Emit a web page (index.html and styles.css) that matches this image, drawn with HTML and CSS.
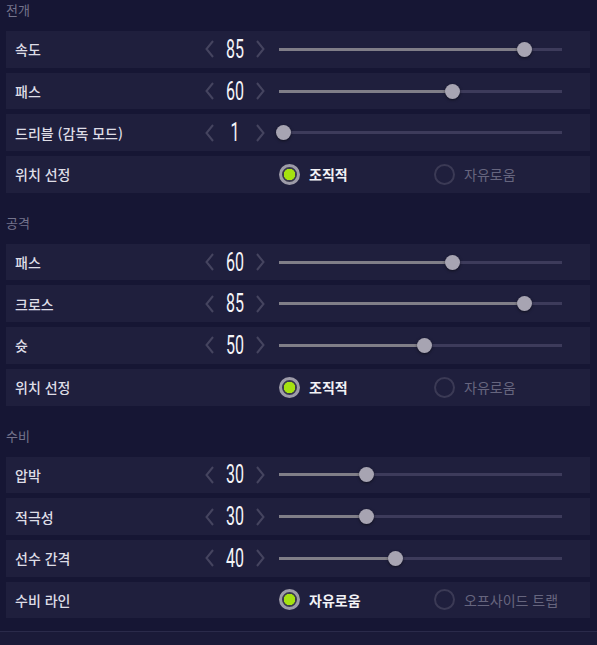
FILE: index.html
```html
<!DOCTYPE html>
<html lang="ko">

<head>
    <meta charset="UTF-8">
    <meta name="viewport" content="width=device-width, initial-scale=1.0">
    <title>팀 전술</title>
    <link rel="stylesheet" href="styles.css">
</head>

<body>
    <div class="panel">
        <div class="section">
            <div class="section-title">전개</div>
            <div class="row">
                <span class="label">속도</span>
                <div class="stepper">
                    <svg class="chev" viewBox="0 0 9 18"><polyline points="8,1 1.5,9 8,17" /></svg>
                    <span class="num">85</span>
                    <svg class="chev" viewBox="0 0 9 18"><polyline points="1,1 7.5,9 1,17" /></svg>
                </div>
                <div class="slider"><div class="fill" style="width: 245px"></div><div class="thumb" style="left: 245px"></div></div>
            </div>
            <div class="row">
                <span class="label">패스</span>
                <div class="stepper">
                    <svg class="chev" viewBox="0 0 9 18"><polyline points="8,1 1.5,9 8,17" /></svg>
                    <span class="num">60</span>
                    <svg class="chev" viewBox="0 0 9 18"><polyline points="1,1 7.5,9 1,17" /></svg>
                </div>
                <div class="slider"><div class="fill" style="width: 173px"></div><div class="thumb" style="left: 173px"></div></div>
            </div>
            <div class="row">
                <span class="label">드리블 (감독 모드)</span>
                <div class="stepper">
                    <svg class="chev" viewBox="0 0 9 18"><polyline points="8,1 1.5,9 8,17" /></svg>
                    <span class="num">1</span>
                    <svg class="chev" viewBox="0 0 9 18"><polyline points="1,1 7.5,9 1,17" /></svg>
                </div>
                <div class="slider"><div class="fill" style="width: 4px"></div><div class="thumb" style="left: 4px"></div></div>
            </div>
            <div class="row">
                <span class="label">위치 선정</span>
                <div class="spacer"></div>
                <div class="options">
                    <span class="option checked"><span class="radio"></span>조직적</span>
                    <span class="option"><span class="radio"></span>자유로움</span>
                </div>
            </div>
        </div>

        <div class="section">
            <div class="section-title">공격</div>
            <div class="row">
                <span class="label">패스</span>
                <div class="stepper">
                    <svg class="chev" viewBox="0 0 9 18"><polyline points="8,1 1.5,9 8,17" /></svg>
                    <span class="num">60</span>
                    <svg class="chev" viewBox="0 0 9 18"><polyline points="1,1 7.5,9 1,17" /></svg>
                </div>
                <div class="slider"><div class="fill" style="width: 173px"></div><div class="thumb" style="left: 173px"></div></div>
            </div>
            <div class="row">
                <span class="label">크로스</span>
                <div class="stepper">
                    <svg class="chev" viewBox="0 0 9 18"><polyline points="8,1 1.5,9 8,17" /></svg>
                    <span class="num">85</span>
                    <svg class="chev" viewBox="0 0 9 18"><polyline points="1,1 7.5,9 1,17" /></svg>
                </div>
                <div class="slider"><div class="fill" style="width: 245px"></div><div class="thumb" style="left: 245px"></div></div>
            </div>
            <div class="row">
                <span class="label">슛</span>
                <div class="stepper">
                    <svg class="chev" viewBox="0 0 9 18"><polyline points="8,1 1.5,9 8,17" /></svg>
                    <span class="num">50</span>
                    <svg class="chev" viewBox="0 0 9 18"><polyline points="1,1 7.5,9 1,17" /></svg>
                </div>
                <div class="slider"><div class="fill" style="width: 145px"></div><div class="thumb" style="left: 145px"></div></div>
            </div>
            <div class="row">
                <span class="label">위치 선정</span>
                <div class="spacer"></div>
                <div class="options">
                    <span class="option checked"><span class="radio"></span>조직적</span>
                    <span class="option"><span class="radio"></span>자유로움</span>
                </div>
            </div>
        </div>

        <div class="section">
            <div class="section-title">수비</div>
            <div class="row">
                <span class="label">압박</span>
                <div class="stepper">
                    <svg class="chev" viewBox="0 0 9 18"><polyline points="8,1 1.5,9 8,17" /></svg>
                    <span class="num">30</span>
                    <svg class="chev" viewBox="0 0 9 18"><polyline points="1,1 7.5,9 1,17" /></svg>
                </div>
                <div class="slider"><div class="fill" style="width: 87px"></div><div class="thumb" style="left: 87px"></div></div>
            </div>
            <div class="row">
                <span class="label">적극성</span>
                <div class="stepper">
                    <svg class="chev" viewBox="0 0 9 18"><polyline points="8,1 1.5,9 8,17" /></svg>
                    <span class="num">30</span>
                    <svg class="chev" viewBox="0 0 9 18"><polyline points="1,1 7.5,9 1,17" /></svg>
                </div>
                <div class="slider"><div class="fill" style="width: 87px"></div><div class="thumb" style="left: 87px"></div></div>
            </div>
            <div class="row">
                <span class="label">선수 간격</span>
                <div class="stepper">
                    <svg class="chev" viewBox="0 0 9 18"><polyline points="8,1 1.5,9 8,17" /></svg>
                    <span class="num">40</span>
                    <svg class="chev" viewBox="0 0 9 18"><polyline points="1,1 7.5,9 1,17" /></svg>
                </div>
                <div class="slider"><div class="fill" style="width: 116px"></div><div class="thumb" style="left: 116px"></div></div>
            </div>
            <div class="row">
                <span class="label">수비 라인</span>
                <div class="spacer"></div>
                <div class="options">
                    <span class="option checked"><span class="radio"></span>자유로움</span>
                    <span class="option"><span class="radio"></span>오프사이드 트랩</span>
                </div>
            </div>
        </div>
    </div>

    <div class="footer"></div>
</body>

</html>
```

FILE: styles.css
```css
/* team tactics panel */
body {
    margin: 0;
    padding: 0;
    background-color: #161634;
    font-family: "Noto Sans CJK KR", "Noto Sans", sans-serif;
    color: #e2e2ea;
    overflow: hidden;
}

.panel {
    width: 584px;
    margin-left: 6px;
}

.section {
    display: flex;
    flex-direction: column;
    gap: 5px;
    margin-bottom: 20px;
}

.section-title {
    height: 20px;
    line-height: 20px;
    font-size: 13px;
    color: #75748c;
    margin-bottom: 6px;
}

.row {
    display: flex;
    align-items: center;
    height: 36.7px;
    background-color: #1f1f3d;
}

.label {
    box-sizing: border-box;
    width: 197px;
    padding-left: 9px;
    font-size: 14px;
    font-weight: 500;
    color: #dedde6;
}

.spacer {
    width: 76px;
}

.stepper {
    box-sizing: border-box;
    width: 76px;
    padding-left: 2px;
    display: flex;
    align-items: center;
}

.chev {
    width: 9px;
    height: 18px;
    fill: none;
    stroke: #45445f;
    stroke-width: 2;
}

.num {
    width: 42px;
    text-align: center;
    font-family: Roboto, sans-serif;
    font-size: 25px;
    color: #f4f4f8;
    transform: scaleX(0.64);
    line-height: 1;
}

.slider {
    position: relative;
    width: 283px;
    height: 3px;
    background-color: #3d3b5b;
}

.fill {
    height: 100%;
    background-color: #807e88;
}

.thumb {
    position: absolute;
    top: -6px;
    width: 15px;
    height: 15px;
    margin-left: -7.5px;
    border-radius: 50%;
    background-color: #a7a4b2;
    box-shadow: 0 1px 3px rgba(0, 0, 0, 0.5);
}

.options {
    display: flex;
}

.option {
    width: 155px;
    display: flex;
    align-items: center;
    gap: 9px;
    font-size: 14px;
    color: #66657e;
}

.option.checked {
    color: #f2f2f6;
    font-weight: 700;
}

.radio {
    width: 21px;
    height: 21px;
    box-sizing: border-box;
    border-radius: 50%;
    border: 2px solid #3b3a55;
}

.option.checked .radio {
    border: 3px solid #9d9ba8;
    background: radial-gradient(circle, #a5e20f 0 5.5px, #3a3a4c 6px);
}

.footer {
    margin-top: -7px;
    height: 30px;
    border-top: 1px solid #2a2a4a;
    background-color: #1a1a38;
}
```
